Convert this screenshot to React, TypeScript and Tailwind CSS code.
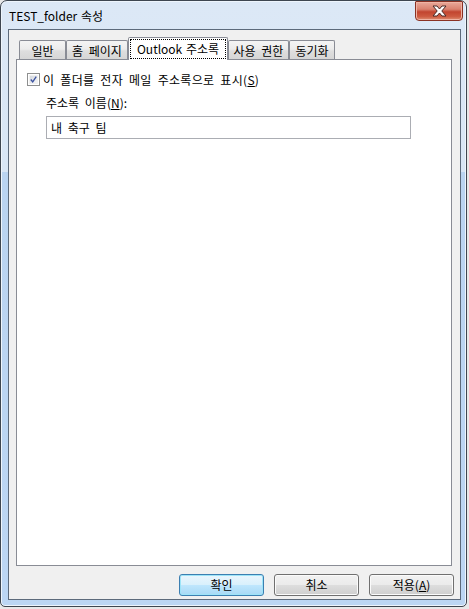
import React from "react";

const ui =
  "font-['Noto_Sans_CJK_KR','Noto_Sans',sans-serif] text-[12px] leading-none text-black [word-spacing:3px]";

const inactiveTab =
  "h-[19px] border border-b-0 border-[#898c95] rounded-t-[2px] bg-[linear-gradient(180deg,#f4f4f4_0%,#ececec_45%,#dedede_55%,#d6d6d6_100%)] flex items-center justify-center pt-[2px]";

const CloseGlyph = () => (
  <svg width="19" height="12" viewBox="0 0 19 12">
    <path
      d="M3 1 L7 1 L9.5 4 L12 1 L16 1 L11.8 6 L16 11 L12 11 L9.5 8 L7 11 L3 11 L7.2 6 Z"
      fill="#ffffff"
      stroke="#4a2a26"
      strokeWidth="1"
      strokeLinejoin="round"
    />
  </svg>
);

const CheckBox = () => (
  <div className="w-[13px] h-[13px] border border-[#8e8f8f] bg-white p-[1px] shrink-0">
    <div className="w-full h-full bg-[linear-gradient(135deg,#d4d8de_0%,#f4f4f5_100%)] border border-[#f0f0f0] flex items-center justify-center">
      <svg width="9" height="9" viewBox="0 0 9 9">
        <path d="M1 4.5 L3.5 7.5 L8 0.8" fill="none" stroke="#3b52a0" strokeWidth="1.7" />
      </svg>
    </div>
  </div>
);

const Button = ({ children, primary }: { children: React.ReactNode; primary?: boolean }) => (
  <button
    className={
      primary
        ? "w-[85px] h-[22px] rounded-[3px] border border-[#3c7fb1] bg-[linear-gradient(180deg,#eaf6fd_0%,#d9f0fc_48%,#bee6fd_52%,#a7d9f5_100%)] shadow-[inset_0_0_0_1px_#9de4f8] flex items-center justify-center"
        : "w-[85px] h-[22px] rounded-[3px] border border-[#707070] bg-[linear-gradient(180deg,#f2f2f2_0%,#ebebeb_48%,#dddddd_52%,#cfcfcf_100%)] shadow-[inset_0_0_0_1px_#fbfbfb] flex items-center justify-center"
    }
  >
    <span className="leading-none">{children}</span>
  </button>
);

export default function App() {
  return (
    <div className={`w-[469px] h-[609px] bg-[#e8e8e8] ${ui}`}>
      <div className="w-[467px] h-[607px] rounded-t-[7px] rounded-b-[5px] border border-[#3e4650] bg-[linear-gradient(180deg,#dce8f6_0px,#d8e6f5_171px,#bad4f1_171px,#bcd6f3_100%)] flex flex-col pl-[7px] pr-[5px] pb-[6px] shadow-[inset_0_0_0_1px_#eef5fc]">
        {/* title bar */}
        <div className="h-[28px] flex items-start justify-between shrink-0">
          <div className="pl-[1px] pt-[9px] [word-spacing:1px]">TEST_folder 속성</div>
          <div className="w-[48px] h-[20px] mr-[-2px] rounded-b-[4px] rounded-t-[1px] border border-[#8a3224] bg-[linear-gradient(180deg,#e9a99a_0%,#d9826f_40%,#c2452f_55%,#cd5a40_80%,#de8f72_100%)] shadow-[inset_0_0_0_1px_#efb4a4] flex items-center justify-center">
            <CloseGlyph />
          </div>
        </div>

        {/* client area */}
        <div className="flex-1 border border-[#5c6a7b] bg-[#f0f0f0] flex flex-col pt-[7px] pl-[7px] pr-[8px] pb-[3px]">
          {/* tabs */}
          <div className="flex items-end pl-[3px] h-[22px] shrink-0">
            <div className={`${inactiveTab} w-[47px]`}>일반</div>
            <div className={`${inactiveTab} w-[62px]`}>홈 페이지</div>
            <div className="relative z-10 w-[100px] h-[23px] -mb-[1px] border border-b-0 border-[#898c95] rounded-t-[2px] bg-white px-[1px] pt-[1px] pb-[1px]">
              <div className="w-full h-full border border-dotted border-black flex items-center justify-center [word-spacing:1px]">
                Outlook 주소록
              </div>
            </div>
            <div className={`${inactiveTab} w-[61px]`}>사용 권한</div>
            <div className={`${inactiveTab} w-[46px]`}>동기화</div>
          </div>

          {/* panel */}
          <div className="flex-1 border border-[#898c95] bg-white flex flex-col pl-[10px] pt-[13px]">
            <div className="flex items-center gap-[3px] h-[13px]">
              <CheckBox />
              <span className="tracking-[0.3px]">
                이 폴더를 전자 메일 주소록으로 표시(<span className="underline">S</span>)
              </span>
            </div>
            <div className="pl-[19px] pt-[9px] flex flex-col">
              <div className="h-[16px] flex items-center">
                주소록 이름(<span className="underline">N</span>):
              </div>
              <div className="mt-[5px] w-[365px] h-[23px] border border-[#abadb3] bg-white flex items-center pl-[4px]">
                내 축구 팀
              </div>
            </div>
          </div>

          {/* buttons */}
          <div className="flex justify-end gap-[10px] pt-[8px] mr-[-2px] shrink-0">
            <Button primary>확인</Button>
            <Button>취소</Button>
            <Button>
              적용(<span className="underline">A</span>)
            </Button>
          </div>
        </div>
      </div>
    </div>
  );
}
